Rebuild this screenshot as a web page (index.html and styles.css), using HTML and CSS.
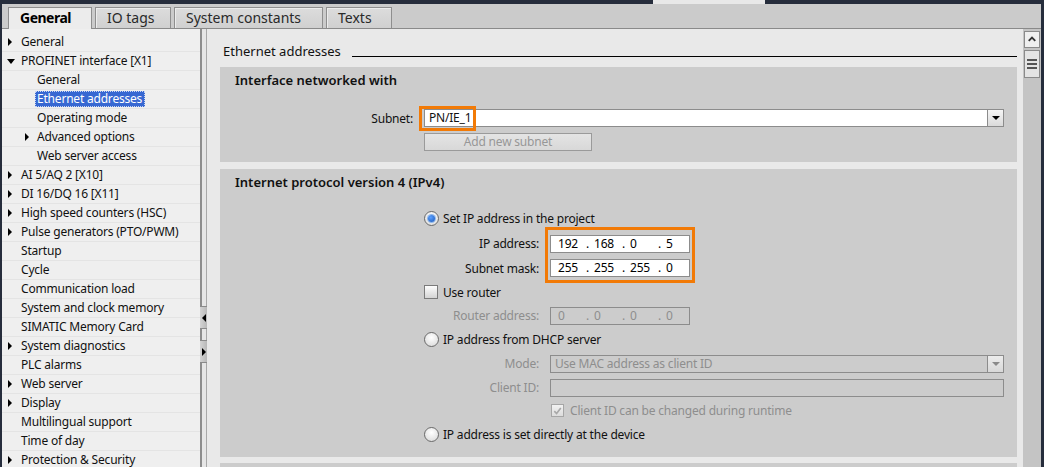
FILE: index.html
```html
<!DOCTYPE html>
<html>
<head>
<meta charset="utf-8">
<link rel="stylesheet" href="styles.css">
</head>
<body>
<div class="app">
  <div class="topbar"><div class="toptab"></div></div>
  <div class="tabs">
    <div class="tab active">General</div>
    <div class="tab w-io">IO tags</div>
    <div class="tab w-sc">System constants</div>
    <div class="tab w-tx">Texts</div>
  </div>
  <div class="main">
    <div class="tree">
      <div class="row l1"><span class="arr right"></span><span class="txt">General</span></div>
      <div class="row l1"><span class="arr down"></span><span class="txt">PROFINET interface [X1]</span></div>
      <div class="row l2"><span class="arr"></span><span class="txt">General</span></div>
      <div class="row l2"><span class="arr"></span><span class="txt sel">Ethernet addresses</span></div>
      <div class="row l2"><span class="arr"></span><span class="txt">Operating mode</span></div>
      <div class="row l2"><span class="arr right"></span><span class="txt">Advanced options</span></div>
      <div class="row l2"><span class="arr"></span><span class="txt">Web server access</span></div>
      <div class="row l1"><span class="arr right"></span><span class="txt">AI 5/AQ 2 [X10]</span></div>
      <div class="row l1"><span class="arr right"></span><span class="txt">DI 16/DQ 16 [X11]</span></div>
      <div class="row l1"><span class="arr right"></span><span class="txt">High speed counters (HSC)</span></div>
      <div class="row l1"><span class="arr right"></span><span class="txt">Pulse generators (PTO/PWM)</span></div>
      <div class="row l1"><span class="arr"></span><span class="txt">Startup</span></div>
      <div class="row l1"><span class="arr"></span><span class="txt">Cycle</span></div>
      <div class="row l1"><span class="arr"></span><span class="txt">Communication load</span></div>
      <div class="row l1"><span class="arr"></span><span class="txt">System and clock memory</span></div>
      <div class="row l1"><span class="arr"></span><span class="txt">SIMATIC Memory Card</span></div>
      <div class="row l1"><span class="arr right"></span><span class="txt">System diagnostics</span></div>
      <div class="row l1"><span class="arr"></span><span class="txt">PLC alarms</span></div>
      <div class="row l1"><span class="arr right"></span><span class="txt">Web server</span></div>
      <div class="row l1"><span class="arr right"></span><span class="txt">Display</span></div>
      <div class="row l1"><span class="arr"></span><span class="txt">Multilingual support</span></div>
      <div class="row l1"><span class="arr"></span><span class="txt">Time of day</span></div>
      <div class="row l1"><span class="arr right"></span><span class="txt">Protection &amp; Security</span></div>
    </div>
    <div class="splitter">
      <div class="sbtn"><span class="tri-l"></span></div>
      <div class="sbtn"><span class="tri-r"></span></div>
    </div>
    <div class="content">
      <div class="pane">
        <div class="pheader"><span class="ptitle">Ethernet addresses</span><span class="pline"></span></div>

        <div class="section s1">
          <div class="stitle">Interface networked with</div>
          <div class="subrow">
            <span class="slab">Subnet:</span>
            <div class="combo white">
              <span class="ctext">PN/IE_1</span>
              <span class="cbtn"><span class="tri-d"></span></span>
              <span class="hl hl-subnet"></span>
            </div>
          </div>
          <div class="btnrow"><div class="btn">Add new subnet</div></div>
        </div>

        <div class="section s2">
          <div class="stitle">Internet protocol version 4 (IPv4)</div>
          <div class="rows">
            <div class="frow h25"><span class="radio on"></span><span class="rtext">Set IP address in the project</span></div>
            <div class="ipgroup">
              <div class="frow h25"><span class="lab">IP address:</span>
                <div class="ip white"><span class="seg">192</span><span class="dot">.</span><span class="seg">168</span><span class="dot">.</span><span class="seg">0</span><span class="dot">.</span><span class="seg last">5</span></div>
              </div>
              <div class="frow h24"><span class="lab">Subnet mask:</span>
                <div class="ip white"><span class="seg">255</span><span class="dot">.</span><span class="seg">255</span><span class="dot">.</span><span class="seg">255</span><span class="dot">.</span><span class="seg last">0</span></div>
              </div>
              <span class="hl hl-ip"></span>
            </div>
            <div class="frow h24"><span class="check"></span><span class="rtext">Use router</span></div>
            <div class="frow h23"><span class="lab dis">Router address:</span>
              <div class="ip dis"><span class="seg">0</span><span class="dot">.</span><span class="seg">0</span><span class="dot">.</span><span class="seg">0</span><span class="dot">.</span><span class="seg last">0</span></div>
            </div>
            <div class="frow h24"><span class="radio"></span><span class="rtext">IP address from DHCP server</span></div>
            <div class="frow h25"><span class="lab dis">Mode:</span>
              <div class="combo dis wide"><span class="ctext">Use MAC address as client ID</span><span class="cbtn"><span class="tri-d g"></span></span></div>
            </div>
            <div class="frow h23"><span class="lab dis">Client ID:</span>
              <div class="field dis wide"></div>
            </div>
            <div class="frow h23 cbrow"><span class="check checked dis"><svg viewBox="0 0 12 12" width="12" height="12"><path d="M2.5 6.2 L5 8.8 L9.6 2.8" fill="none" stroke="#a8a8a8" stroke-width="1.8"/></svg></span><span class="rtext dis">Client ID can be changed during runtime</span></div>
            <div class="frow h24"><span class="radio"></span><span class="rtext">IP address is set directly at the device</span></div>
          </div>
        </div>

        <div class="section s3"></div>
      </div>
      <div class="vscroll">
        <div class="vup"><svg viewBox="0 0 15 15" width="15" height="15"><path d="M4 9 L7.5 5.5 L11 9" fill="none" stroke="#333" stroke-width="2"/></svg></div>
        <div class="vthumb"><span></span><span></span><span></span></div>
      </div>
    </div>
  </div>
</div>
</body>
</html>
```

FILE: styles.css
```css
* { box-sizing: border-box; }
html, body { margin: 0; padding: 0; }
body {
  width: 1044px;
  height: 467px;
  overflow: hidden;
  font-family: "Noto Sans", "Open Sans", "DejaVu Sans", sans-serif;
  font-size: 12px;
  letter-spacing: -0.2px;
  color: #111;
  background: #262d3c;
}
.app {
  height: 467px;
  display: flex;
  flex-direction: column;
  padding: 0 3px 0 2px;
  background: #262d3c;
}
.topbar { height: 4px; display: flex; }
.toptab { width: 112px; margin-left: 651px; background: #e8e8e8; }

.tabs {
  height: 25px;
  background: #cbcbcb;
  border-bottom: 1px solid #8a8a8a;
  display: flex;
  align-items: flex-end;
  padding-left: 6px;
  gap: 3px;
}
.tab {
  height: 21px;
  border: 1px solid #8e8e8e;
  border-bottom: none;
  background: linear-gradient(#dcdcdc, #d0d0d0);
  font-size: 14px;
  letter-spacing: 0;
  line-height: 20px;
  padding-left: 11px;
  color: #2a2a2a;
  box-shadow: inset 1px 1px 0 #ececec;
  white-space: nowrap;
}
.tab.active {
  width: 84px;
  height: 22px;
  margin-bottom: -1px;
  background: #ececec;
  font-weight: bold;
  letter-spacing: -0.5px;
  color: #000;
  box-shadow: none;
}
.w-io { width: 76px; }
.w-sc { width: 149px; }
.w-tx { width: 66px; }

.main { flex: 1; display: flex; min-height: 0; }

.tree {
  width: 198px;
  flex: none;
  background: #efefef;
  padding-top: 4px;
  overflow: hidden;
}
.row {
  height: 19px;
  display: flex;
  align-items: center;
  border-bottom: 1px solid #e4e4e4;
  white-space: nowrap;
}
.row.l1 { padding-left: 6px; }
.row.l2 { padding-left: 23px; }
.arr { width: 13px; flex: none; display: flex; align-items: center; }
.l2 .arr { width: 12px; }
.arr.right::before {
  content: "";
  border-left: 4px solid #000;
  border-top: 4px solid transparent;
  border-bottom: 4px solid transparent;
}
.arr.down::before {
  content: "";
  margin-left: -1px;
  border-top: 5px solid #000;
  border-left: 4px solid transparent;
  border-right: 4px solid transparent;
}
.txt { line-height: 16px; }
.sel {
  background: #3768d2;
  color: #fff;
  margin-left: -2px;
  padding: 0 3px 0 2px;
  outline: 1px dotted #c9d6f2;
  outline-offset: -1px;
}

.splitter {
  width: 7px;
  flex: none;
  background: #e6e6e6;
  border-left: 2px solid #8d8d8d;
  border-right: 1px solid #a8a8a8;
  padding-top: 277px;
  display: flex;
  flex-direction: column;
  gap: 11px;
}
.sbtn {
  height: 23px;
  margin-left: -2px;
  margin-right: -1px;
  background: linear-gradient(90deg, #d4d4d4, #b8b8b8);
  border-top: 1px solid #8a8a8a;
  border-bottom: 1px solid #8a8a8a;
  display: flex;
  align-items: center;
  justify-content: center;
}
.tri-l { border-right: 4px solid #000; border-top: 4px solid transparent; border-bottom: 4px solid transparent; }
.tri-r { border-left: 4px solid #000; border-top: 4px solid transparent; border-bottom: 4px solid transparent; }

.content { flex: 1; display: flex; background: #e9e9e9; min-width: 0; }
.pane { width: 810px; flex: none; padding: 12px 0 0 13px; overflow: hidden; }

.pheader { height: 20px; display: flex; margin-bottom: 6px; }
.ptitle { font-size: 13px; letter-spacing: 0; line-height: 20px; padding-left: 3px; color: #111; }
.pline { flex: 1; height: 16px; border-bottom: 1px solid #000; margin-left: 11px; }

.section { background: #cccccc; }
.s1 { height: 95px; }
.s2 { height: 288px; margin-top: 7px; }
.s3 { height: 40px; margin-top: 6px; }
.stitle {
  height: 22px;
  padding: 4px 0 0 15px;
  font-size: 13px;
  letter-spacing: 0;
  font-weight: 600;
  line-height: 18px;
  color: #111;
}

.subrow { display: flex; align-items: center; height: 18px; margin-top: 20px; padding: 0 13px 0 150px; }
.slab { width: 43px; text-align: right; margin-right: 11px; }
.combo {
  position: relative;
  flex: 1;
  height: 18px;
  border: 1px solid #8c8c8c;
  display: flex;
  align-items: center;
}
.combo.white { background: #fff; }
.combo.dis { background: #cccccc; color: #8e8e8e; }
.ctext { flex: 1; padding-left: 4px; line-height: 16px; white-space: nowrap; }
.cbtn {
  width: 16px;
  height: 16px;
  border-left: 1px solid #8c8c8c;
  background: linear-gradient(#f6f6f6, #dadada);
  display: flex;
  align-items: center;
  justify-content: center;
}
.dis .cbtn { background: linear-gradient(#ececec, #d8d8d8); }
.tri-d { border-top: 4px solid #000; border-left: 4px solid transparent; border-right: 4px solid transparent; }
.tri-d.g { border-top-color: #8a8a8a; }

.hl { position: absolute; border: 3px solid #f27a06; pointer-events: none; }
.hl-subnet { left: -6px; top: -4px; width: 57px; height: 25px; }

.btnrow { margin-top: 6px; padding-left: 204px; }
.btn {
  width: 168px;
  height: 18px;
  border: 1px solid #9a9a9a;
  background: linear-gradient(#e4e4e4, #d8d8d8);
  color: #979797;
  text-align: center;
  line-height: 16px;
}

.rows { margin-top: 15px; padding: 0 13px 0 204px; }
.frow { display: flex; align-items: center; }
.h23 { height: 23px; }
.h24 { height: 24px; }
.h25 { height: 25px; }
.lab { width: 115px; text-align: right; margin-right: 11px; flex: none; white-space: nowrap; }
.lab.dis, .rtext.dis { color: #8e8e8e; }
.rtext { white-space: nowrap; }

.radio {
  width: 15px;
  height: 15px;
  border-radius: 50%;
  border: 1px solid #6a6a6a;
  background: radial-gradient(circle at 50% 35%, #ffffff, #d6d6d6);
  margin-right: 4px;
  flex: none;
  display: flex;
  align-items: center;
  justify-content: center;
}
.radio.on::after {
  content: "";
  width: 7px;
  height: 7px;
  border-radius: 50%;
  background: radial-gradient(circle at 40% 35%, #5aa0ff, #1b57b8);
  box-shadow: 0 0 0 1px #8fb7ea;
}
.check {
  width: 14px;
  height: 14px;
  border: 1px solid #7a7a7a;
  background: linear-gradient(#fdfdfd, #d4d4d4);
  margin-right: 5px;
  flex: none;
  display: flex;
  align-items: center;
  justify-content: center;
}
.check.dis { border-color: #a6a6a6; background: linear-gradient(#f2f2f2, #dcdcdc); width: 13px; height: 13px; margin-right: 6px; }
.cbrow { padding-left: 127px; }

.ipgroup { position: relative; }
.ip {
  width: 140px;
  height: 18px;
  border: 1px solid #8c8c8c;
  display: flex;
  align-items: center;
  padding-left: 7px;
  line-height: 16px;
  overflow: hidden;
}
.ip.white { background: #fff; color: #000; }
.ip.dis { background: #cccccc; color: #8e8e8e; }
.seg { width: 28px; flex: none; }
.seg.last { width: auto; }
.dot { width: 8px; flex: none; }
.hl-ip { left: 121px; top: -4px; width: 150px; height: 56px; }

.field { height: 18px; border: 1px solid #8c8c8c; }
.wide { flex: 1; }

.vscroll {
  width: 18px;
  flex: none;
  margin-left: 6px;
  background: #c4c4c4;
  padding: 2px 1px 0 1px;
}
.vup {
  height: 17px;
  background: #efefef;
  border: 1px solid #8a8a8a;
  display: flex;
  align-items: center;
  justify-content: center;
}
.vthumb {
  margin-top: 2px;
  height: 28px;
  background: #e4e4e4;
  border: 1px solid #8a8a8a;
  display: flex;
  flex-direction: column;
  align-items: center;
  justify-content: center;
  gap: 2px;
}
.vthumb span { width: 10px; height: 2px; background: #555; }
```
